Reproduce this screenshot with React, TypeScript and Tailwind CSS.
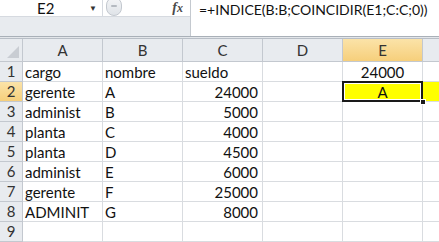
import React from "react";

const cols = ["A", "B", "C", "D", "E"];

type Row = { n: number; cells: string[] };

const rows: Row[] = [
	{ n: 1, cells: ["cargo", "nombre", "sueldo", "", "24000"] },
	{ n: 2, cells: ["gerente", "A", "24000", "", "A"] },
	{ n: 3, cells: ["administ", "B", "5000", "", ""] },
	{ n: 4, cells: ["planta", "C", "4000", "", ""] },
	{ n: 5, cells: ["planta", "D", "4500", "", ""] },
	{ n: 6, cells: ["administ", "E", "6000", "", ""] },
	{ n: 7, cells: ["gerente", "F", "25000", "", ""] },
	{ n: 8, cells: ["ADMINIT", "G", "8000", "", ""] },
	{ n: 9, cells: ["", "", "", "", ""] },
];

function Cell({ text, col, row }: { text: string; col: number; row: number }) {
	const selected = row === 2 && col === 4;
	let align = "justify-start pl-[2px]";
	if (col === 2 && row > 1) align = "justify-end pr-[4px]";
	if (col === 4) align = "justify-center";
	return (
		<div
			className={`relative h-[20px] border-r border-b border-[#d9dce0] flex items-center ${align} ${
				selected ? "bg-[#ffff00]" : "bg-white"
			}`}
		>
			<span className="leading-none pt-[1px]">{text}</span>
			{selected && (
				<>
					<div className="absolute z-10 left-[-1px] top-[-1px] right-[-1px] bottom-[-1px] border-2 border-[#1a1a1a]" />
					<div className="absolute z-10 left-[1px] top-[1px] right-[1px] bottom-[1px] border border-white" />
					<div className="absolute z-20 right-[-4px] bottom-[-4px] w-[6px] h-[6px] bg-[#1a1a1a] border border-white" />
				</>
			)}
		</div>
	);
}

export default function App() {
	return (
		<div className="w-[439px] h-[242px] overflow-hidden bg-white text-[#111] font-['Lato','Liberation_Sans',sans-serif] text-[15px]">
			{/* formula bar */}
			<div className="flex h-[37px] border-b border-[#a9b0b8]">
				<div className="w-[191px] flex flex-col border-r border-[#c4c9cf]">
					<div className="h-[16px] flex items-center bg-white">
						<div className="w-[97px] flex items-center">
							<span className="pl-[37px] leading-none text-[15px]">E2</span>
							<span className="ml-auto text-[8px] leading-none text-[#333]">▼</span>
						</div>
						<div className="w-px h-full bg-[#d6dae0] ml-[5px]" />
						<div className="ml-[3px] -mt-[4px] w-[16px] h-[19px] rounded-full border border-[#c3c8cf] bg-gradient-to-b from-[#f4f5f7] to-[#dfe3e8] flex items-center justify-center">
							<div className="w-[6px] h-[2px] bg-[#b5bac1] rounded-sm" />
						</div>
						<span className="ml-auto mr-[7px] font-['Liberation_Serif',serif] italic font-bold text-[14px] text-[#4a4a4a] leading-none">
							f<span className="text-[12px]">x</span>
						</span>
					</div>
					<div className="flex-1 bg-[#e8ebef] border-t border-[#d6dae0]" />
				</div>
				<div className="flex-1 pl-[8px] pt-[3px] text-[14px] leading-none">
					=+INDICE(B:B;COINCIDIR(E1;C:C;0))
				</div>
			</div>
			<div className="h-[2px] bg-[#e3e6ea] border-b border-[#b8bec6]" />

			{/* sheet */}
			<div className="grid grid-cols-[23px_80px_80px_80px_80px_80px_1fr]">
				<div className="relative h-[23px] bg-[#e8ebef] border-r border-b border-[#c3c8cf]">
					<div className="absolute right-[3px] bottom-[3px] w-0 h-0 border-l-[12px] border-l-transparent border-b-[12px] border-b-[#c9cdd3]" />
				</div>
				{cols.map((c) => (
					<div
						key={c}
						className={`h-[23px] flex items-center justify-center border-r border-b border-[#c3c8cf] text-[#333] ${
							c === "E" ? "bg-gradient-to-b from-[#fbe3a8] to-[#f6cf7b]" : "bg-[#e8ebef]"
						}`}
					>
						{c}
					</div>
				))}
				<div className="h-[23px] bg-[#e8ebef] border-b border-[#c3c8cf]" />

				{rows.map((r) => (
					<React.Fragment key={r.n}>
						<div
							className={`h-[20px] flex items-center justify-center border-r border-b border-[#c3c8cf] text-[#333] ${
								r.n === 2 ? "bg-gradient-to-b from-[#fbe3a8] to-[#f6cf7b]" : "bg-[#e8ebef]"
							}`}
						>
							{r.n}
						</div>
						{r.cells.map((t, i) => (
							<Cell key={i} text={t} col={i} row={r.n} />
						))}
						<div className={`h-[20px] border-b border-[#d9dce0] ${r.n === 2 ? "bg-[#ffff00]" : "bg-white"}`} />
					</React.Fragment>
				))}
			</div>
		</div>
	);
}
